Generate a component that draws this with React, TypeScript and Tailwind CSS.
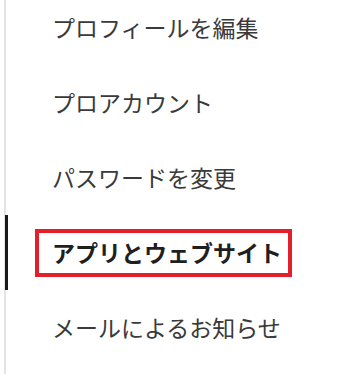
import React from "react";

const items = [
  "プロフィールを編集",
  "プロアカウント",
  "パスワードを変更",
  "アプリとウェブサイト",
  "メールによるお知らせ",
];

export default function App() {
  return (
    <div
      className="relative w-[340px] h-[374px] overflow-hidden bg-white"
      style={{ fontFamily: '"Noto Sans CJK JP", "Noto Sans", sans-serif' }}
    >
      <div className="ml-[4px] -mt-[10px] border-l-2 border-[#e4e4e4] min-h-[400px]">
        {items.map((t, i) => {
          const active = i === 3;
          return (
            <div key={t} className="relative h-[75px] flex items-center pl-[46px]">
              {active && (
                <>
                  <span className="absolute left-[-1px] top-0 h-[75px] w-[3px] bg-[#1a1a1a]" />
                  <span className="absolute left-[29px] top-[14px] w-[257px] h-[48px] border-[4px] border-[#e3202a]" />
                </>
              )}
              <span
                className={
                  active
                    ? "relative text-[23px] font-bold text-[#1f1f1f] leading-none"
                    : "text-[23px] text-[#3a3a3a] leading-none"
                }
              >
                {t}
              </span>
            </div>
          );
        })}
      </div>
    </div>
  );
}
